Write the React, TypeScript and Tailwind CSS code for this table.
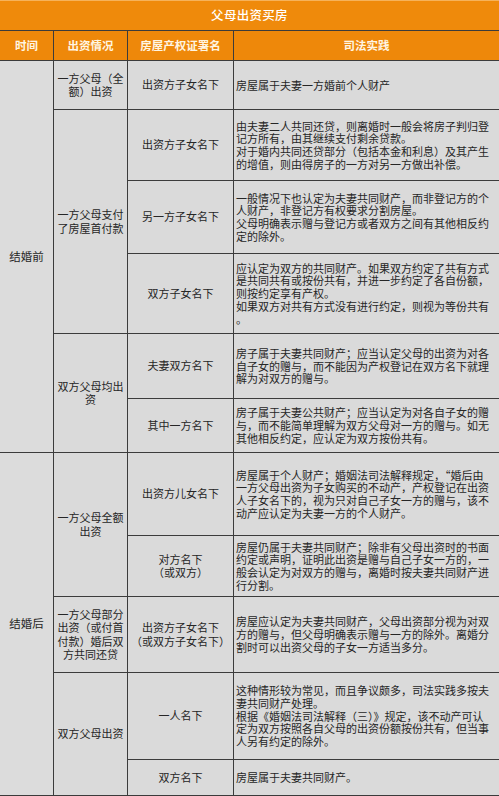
type Row = {
  name: string[]
  text: string[]
}

const rows: Row[] = [
  { name: ["出资方子女名下"], text: ["房屋属于夫妻一方婚前个人财产"] },
  {
    name: ["出资方子女名下"],
    text: [
      "由夫妻二人共同还贷，则离婚时一般会将房子判归登",
      "记方所有，由其继续支付剩余贷款。",
      "对于婚内共同还贷部分（包括本金和利息）及其产生",
      "的增值，则由得房子的一方对另一方做出补偿。",
    ],
  },
  {
    name: ["另一方子女名下"],
    text: [
      "一般情况下也认定为夫妻共同财产，而非登记方的个",
      "人财产，非登记方有权要求分割房屋。",
      "父母明确表示赠与登记方或者双方之间有其他相反约",
      "定的除外。",
    ],
  },
  {
    name: ["双方子女名下"],
    text: [
      "应认定为双方的共同财产。如果双方约定了共有方式",
      "是共同共有或按份共有，并进一步约定了各自份额，",
      "则按约定享有产权。",
      "如果双方对共有方式没有进行约定，则视为等份共有",
      "。",
    ],
  },
  {
    name: ["夫妻双方名下"],
    text: [
      "房子属于夫妻共同财产；应当认定父母的出资为对各",
      "自子女的赠与，而不能因为产权登记在双方名下就理",
      "解为对双方的赠与。",
    ],
  },
  {
    name: ["其中一方名下"],
    text: [
      "房子属于夫妻公共财产；应当认定为对各自子女的赠",
      "与，而不能简单理解为双方父母对一方的赠与。如无",
      "其他相反约定，应认定为双方按份共有。",
    ],
  },
  {
    name: ["出资方儿女名下"],
    text: [
      "房屋属于个人财产；婚姻法司法解释规定，“婚后由",
      "一方父母出资为子女购买的不动产，产权登记在出资",
      "人子女名下的，视为只对自己子女一方的赠与，该不",
      "动产应认定为夫妻一方的个人财产。",
    ],
  },
  {
    name: ["对方名下", "（或双方）"],
    text: [
      "房屋仍属于夫妻共同财产；除非有父母出资时的书面",
      "约定或声明，证明此出资是赠与自己子女一方的，一",
      "般会认定为对双方的赠与，离婚时按夫妻共同财产进",
      "行分割。",
    ],
  },
  {
    name: ["出资方子女名下", "（或双方子女名下）"],
    text: [
      "房屋应认定为夫妻共同财产，父母出资部分视为对双",
      "方的赠与，但父母明确表示赠与一方的除外。离婚分",
      "割时可以出资父母的子女一方适当多分。",
    ],
  },
  {
    name: ["一人名下"],
    text: [
      "这种情形较为常见，而且争议颇多，司法实践多按夫",
      "妻共同财产处理。",
      "根据《婚姻法司法解释（三）》规定，该不动产可认",
      "定为双方按照各自父母的出资份额按份共有，但当事",
      "人另有约定的除外。",
    ],
  },
  { name: ["双方名下"], text: ["房屋属于夫妻共同财产。"] },
]

// row-start classes for body rows (grid rows 3..13)
const rowStarts = [
  "row-start-3",
  "row-start-4",
  "row-start-5",
  "row-start-6",
  "row-start-7",
  "row-start-8",
  "row-start-9",
  "row-start-10",
  "row-start-11",
  "row-start-12",
  "row-start-13",
]

const sources = [
  { lines: ["一方父母（全", "额）出资"], pos: "row-start-3 row-span-1" },
  { lines: ["一方父母支付", "了房屋首付款"], pos: "row-start-4 row-span-3" },
  { lines: ["双方父母均出", "资"], pos: "row-start-7 row-span-2" },
  { lines: ["一方父母全额", "出资"], pos: "row-start-9 row-span-2" },
  { lines: ["一方父母部分", "出资（或付首", "付款）婚后双", "方共同还贷"], pos: "row-start-11 row-span-1" },
  { lines: ["双方父母出资"], pos: "row-start-12 row-span-2" },
]

const headers = ["时间", "出资情况", "房屋产权证署名", "司法实践"]

function App() {
  return (
    <div className="w-[499px] h-[796px] bg-[#3b3b3b] border-b border-[#3b3b3b] font-['Noto_Sans_CJK_SC',sans-serif] text-[#262626]">
      <div className="grid grid-cols-[53px_73px_105px_265px] grid-rows-[30px_29px_48px_70px_72px_79px_64px_53px_82px_60px_75px_86px_35px] gap-px">
        {/* Title */}
        <div className="col-span-4 row-start-1 flex items-center justify-center bg-[#ef8a0b] border-t border-[#f6b25a] text-white text-[12.5px] font-medium tracking-[0.3px]">
          父母出资买房
        </div>

        {/* Header row */}
        {headers.map((h) => (
          <div
            key={h}
            className="row-start-2 flex items-center justify-center bg-[#ee880a] text-[#fff5e2] text-[11.5px] font-bold"
          >
            {h}
          </div>
        ))}

        {/* 时间 */}
        <div className="col-start-1 row-start-3 row-span-6 flex items-center justify-center bg-[#dcdcdc] text-[11.5px]">
          结婚前
        </div>
        <div className="col-start-1 row-start-9 row-span-5 flex items-center justify-center bg-[#dcdcdc] text-[11.5px]">
          结婚后
        </div>

        {/* 出资情况 */}
        {sources.map((s, i) => (
          <div
            key={i}
            className={`col-start-2 ${s.pos} flex flex-col items-center justify-center bg-[#dadada] text-[11px] leading-[13.5px]`}
          >
            {s.lines.map((l) => (
              <span key={l} className="whitespace-nowrap">{l}</span>
            ))}
          </div>
        ))}

        {/* 署名 + 司法实践 */}
        {rows.map((r, i) => (
          <div key={i} className="contents">
            <div
              className={`col-start-3 ${rowStarts[i]} flex flex-col items-center justify-center bg-[#dadada] text-[11px] leading-[13.5px]`}
            >
              {r.name.map((n) => (
                <span key={n} className="whitespace-nowrap">{n}</span>
              ))}
            </div>
            <div
              className={`col-start-4 ${rowStarts[i]} flex flex-col justify-center bg-[#dadada] pl-[2px] text-[11px] leading-[12.7px]`}
            >
              {r.text.map((t, j) => (
                <span key={j} className="whitespace-nowrap">{t}</span>
              ))}
            </div>
          </div>
        ))}
      </div>
    </div>
  )
}

export default App
